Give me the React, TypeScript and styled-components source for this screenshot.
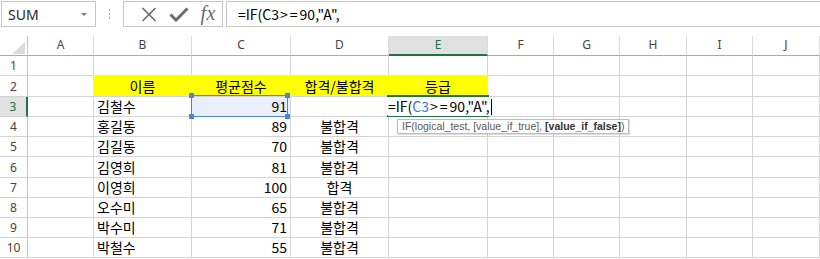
import styled, { createGlobalStyle, css } from 'styled-components';

const GlobalStyle = createGlobalStyle`
  html, body {
    margin: 0;
    padding: 0;
    background: #ffffff;
  }
  body {
    font-family: "Noto Sans CJK KR", "Noto Sans", sans-serif;
    color: #000;
  }
`;

const CELL_FONT = `"Noto Sans CJK KR", "Noto Sans", sans-serif`;
const UI_FONT = `"Noto Sans", "Liberation Sans", sans-serif`;
const GRID = '#d4d4d4';
const HEADER_LINE = '#ababab';
const EXCEL_GREEN = '#217346';
const REF_BLUE = '#4e82dc';

const COLUMNS = ['A', 'B', 'C', 'D', 'E', 'F', 'G', 'H', 'I', 'J'];
const COL_WIDTHS = [28, 66, 98, 99, 98, 99, 66, 66, 67, 66, 67];
// header row, then rows 1..10
const ROW_HEIGHTS = [20, 20, 21, 20, 20, 20, 21, 20, 20, 20, 20];

type Align = 'left' | 'right' | 'center';

interface RowData {
    name?: string;
    score?: string;
    result?: string;
}

const DATA: RowData[] = [
    {},
    {},
    { name: '김철수', score: '91' },
    { name: '홍길동', score: '89', result: '불합격' },
    { name: '김길동', score: '70', result: '불합격' },
    { name: '김영희', score: '81', result: '불합격' },
    { name: '이영희', score: '100', result: '합격' },
    { name: '오수미', score: '65', result: '불합격' },
    { name: '박수미', score: '71', result: '불합격' },
    { name: '박철수', score: '55', result: '불합격' },
];

const HEADINGS = ['이름', '평균점수', '합격/불합격', '등급'];

const Page = styled.div`
    width: 820px;
    height: 259px;
    overflow: hidden;
    background: #fff;
`;

const FormulaBar = styled.div`
    display: flex;
    align-items: stretch;
    height: 26px;
    margin-top: 1px;
    margin-bottom: 9px;
`;

const NameBox = styled.div`
    position: relative;
    box-sizing: border-box;
    width: 95px;
    margin-left: 1px;
    border: 1px solid #c6c6c6;
    padding-left: 6px;
    display: flex;
    align-items: center;
    font-family: ${UI_FONT};
    font-size: 14px;
    color: #262626;

    &::after {
        content: '';
        position: absolute;
        right: 8px;
        top: 11px;
        border-left: 3px solid transparent;
        border-right: 3px solid transparent;
        border-top: 3px solid #777;
    }
`;

const Grip = styled.div`
    width: 27px;
    display: flex;
    flex-direction: column;
    align-items: center;
    justify-content: center;
    gap: 2px;

    & > span {
        width: 1px;
        height: 2px;
        background: #a6a6a6;
    }
`;

const ButtonGroup = styled.div`
    box-sizing: border-box;
    width: 100px;
    border: 1px solid #c6c6c6;
    display: flex;
    align-items: center;
    padding-left: 9px;
`;

const IconButton = styled.div<{ $width: number }>`
    width: ${(p) => p.$width}px;
    height: 24px;
    display: flex;
    align-items: center;
    justify-content: center;
    color: #6d6d6d;
`;

const FxLabel = styled.span`
    font-family: "Liberation Serif", serif;
    font-style: italic;
    font-size: 20px;
    color: #6b6b6b;
    letter-spacing: 0.5px;
    margin-top: -2px;
`;

const FormulaInput = styled.div`
    flex: 1;
    margin-left: 3px;
    box-sizing: border-box;
    border: 1px solid #c6c6c6;
    border-right: none;
    padding-left: 11px;
    display: flex;
    align-items: center;
    font-family: ${CELL_FONT};
    font-size: 14px;
    color: #000;
    white-space: nowrap;
`;

const Compare = styled.span`
    letter-spacing: 2px;
    margin-left: 1px;
`;

const RefText = styled.span`
    color: #3f6fd1;
`;

const Sheet = styled.div`
    display: grid;
    grid-template-columns: ${COL_WIDTHS.map((w) => `${w}px`).join(' ')};
    grid-template-rows: ${ROW_HEIGHTS.map((h) => `${h}px`).join(' ')};
`;

const Corner = styled.div`
    position: relative;
    box-sizing: border-box;
    border-right: 1px solid #c6c6c6;
    border-bottom: 1px solid ${HEADER_LINE};

    &::after {
        content: '';
        position: absolute;
        right: 2px;
        bottom: 1px;
        width: 0;
        height: 0;
        border-style: solid;
        border-width: 0 0 12px 13px;
        border-color: transparent transparent #dcdcdc transparent;
    }
`;

const ColHeader = styled.div<{ $active?: boolean }>`
    box-sizing: border-box;
    display: flex;
    align-items: center;
    justify-content: center;
    padding-bottom: 2px;
    font-family: ${UI_FONT};
    font-size: 12px;
    color: #444;
    border-right: 1px solid #dadada;
    border-bottom: 1px solid ${HEADER_LINE};

    ${(p) =>
        p.$active &&
        css`
            background: #e1e1e1;
            color: ${EXCEL_GREEN};
            border-bottom: 2px solid ${EXCEL_GREEN};
            padding-bottom: 1px;
        `}
`;

const RowHeader = styled.div<{ $active?: boolean }>`
    box-sizing: border-box;
    display: flex;
    align-items: center;
    justify-content: center;
    font-family: ${UI_FONT};
    font-size: 12px;
    color: #444;
    border-right: 1px solid #c6c6c6;
    border-bottom: 1px solid ${GRID};

    ${(p) =>
        p.$active &&
        css`
            background: #e1e1e1;
            color: ${EXCEL_GREEN};
            border-right: 2px solid ${EXCEL_GREEN};
        `}
`;

const Cell = styled.div<{ $align?: Align; $fill?: string }>`
    box-sizing: border-box;
    display: flex;
    align-items: center;
    justify-content: ${(p) => (p.$align === 'right' ? 'flex-end' : p.$align === 'center' ? 'center' : 'flex-start')};
    padding: 0 3px;
    font-family: ${CELL_FONT};
    font-size: 14px;
    line-height: 19px;
    white-space: nowrap;
    border-right: 1px solid ${GRID};
    border-bottom: 1px solid ${GRID};

    ${(p) =>
        p.$fill &&
        css`
            background: ${p.$fill};
            border-right-color: ${p.$fill};
            box-shadow: -1px -1px 0 0 ${p.$fill};
        `}
`;

const RefCell = styled(Cell)`
    position: relative;
    background: #eaf0fb;
`;

const RefFrame = styled.div`
    position: absolute;
    left: -1px;
    right: 2px;
    top: -2px;
    bottom: -1px;
    border: 1.5px solid ${REF_BLUE};
    pointer-events: none;
`;

const Handle = styled.span<{ $x: 'left' | 'right'; $y: 'top' | 'bottom' }>`
    position: absolute;
    width: 5px;
    height: 5px;
    background: ${REF_BLUE};
    ${(p) => (p.$x === 'left' ? 'left: -3px;' : 'right: -3px;')}
    ${(p) => (p.$y === 'top' ? 'top: -3px;' : 'bottom: -3px;')}
`;

const ActiveCell = styled(Cell)`
    position: relative;
    z-index: 3;
    overflow: visible;
    padding-left: 0;
    background: #fff;

    &::after {
        content: '';
        position: absolute;
        left: -2px;
        right: -2px;
        top: -2px;
        bottom: -1px;
        border-top: 2px solid ${EXCEL_GREEN};
        border-bottom: 2px solid ${EXCEL_GREEN};
        pointer-events: none;
    }
`;

const EditText = styled.span`
    position: relative;
    z-index: 1;
    margin-left: -1px;
    background: #fff;
    display: inline-flex;
    align-items: center;
`;

const Caret = styled.span`
    display: inline-block;
    width: 1px;
    height: 16px;
    margin-left: 1px;
    background: #000;
`;

const Tooltip = styled.div`
    position: absolute;
    left: 8px;
    top: 22px;
    z-index: 4;
    box-sizing: border-box;
    height: 15px;
    padding: 0 4px;
    display: flex;
    align-items: center;
    background: #fff;
    border: 1px solid #bcbcbc;
    box-shadow: 1px 1px 1px rgba(0, 0, 0, 0.12);
    font-family: "Liberation Sans", Arial, sans-serif;
    font-size: 10.5px;
    color: #595959;
    white-space: nowrap;

    & > b {
        color: #333;
        margin-left: 3px;
    }
`;

const CloseIcon = () => (
    <svg width="16" height="15" viewBox="0 0 16 15">
        <path d="M1.5 1 L14.5 14 M14.5 1 L1.5 14" stroke="currentColor" strokeWidth="1.7" fill="none" />
    </svg>
);

const CheckIcon = () => (
    <svg width="20" height="15" viewBox="0 0 20 15">
        <path d="M1.5 7.5 L7 13 L18.5 1.5" stroke="currentColor" strokeWidth="3" fill="none" />
    </svg>
);

const RefBox = () => (
    <RefFrame>
        <Handle $x="left" $y="top" />
        <Handle $x="right" $y="top" />
        <Handle $x="left" $y="bottom" />
        <Handle $x="right" $y="bottom" />
    </RefFrame>
);

const renderRow = (row: RowData, n: number) => {
    const cells: React.ReactNode[] = [
        <RowHeader key={`h${n}`} $active={n === 3}>
            {n}
        </RowHeader>,
        <Cell key={`${n}A`} />,
    ];

    if (n === 2) {
        HEADINGS.forEach((h) =>
            cells.push(
                <Cell key={`${n}${h}`} $align="center" $fill="#ffff00">
                    {h}
                </Cell>,
            ),
        );
    } else {
        cells.push(<Cell key={`${n}B`}>{row.name}</Cell>);
        cells.push(
            n === 3 ? (
                <RefCell key={`${n}C`} $align="right">
                    {row.score}
                    <RefBox />
                </RefCell>
            ) : (
                <Cell key={`${n}C`} $align="right">
                    {row.score}
                </Cell>
            ),
        );
        cells.push(
            <Cell key={`${n}D`} $align="center">
                {row.result}
            </Cell>,
        );
        cells.push(
            n === 3 ? (
                <ActiveCell key={`${n}E`}>
                    <EditText>
                        =IF(<RefText>C3</RefText>
                        <Compare>&gt;=</Compare>90,"A",
                        <Caret />
                    </EditText>
                    <Tooltip>
                        IF(logical_test, [value_if_true], <b>[value_if_false]</b>)
                    </Tooltip>
                </ActiveCell>
            ) : (
                <Cell key={`${n}E`} />
            ),
        );
    }

    ['F', 'G', 'H', 'I', 'J'].forEach((c) => cells.push(<Cell key={`${n}${c}`} />));
    return cells;
};

const App = () => {
    return (
        <Page>
            <GlobalStyle />
            <FormulaBar>
                <NameBox>SUM</NameBox>
                <Grip>
                    <span />
                    <span />
                    <span />
                </Grip>
                <ButtonGroup>
                    <IconButton $width={32}>
                        <CloseIcon />
                    </IconButton>
                    <IconButton $width={30}>
                        <CheckIcon />
                    </IconButton>
                    <IconButton $width={28}>
                        <FxLabel>fx</FxLabel>
                    </IconButton>
                </ButtonGroup>
                <FormulaInput>
                    =IF(C3<Compare>&gt;=</Compare>90,"A",
                </FormulaInput>
            </FormulaBar>

            <Sheet>
                <Corner />
                {COLUMNS.map((c) => (
                    <ColHeader key={c} $active={c === 'E'}>
                        {c}
                    </ColHeader>
                ))}
                {DATA.map((row, i) => renderRow(row, i + 1))}
            </Sheet>
        </Page>
    );
};

export default App;
